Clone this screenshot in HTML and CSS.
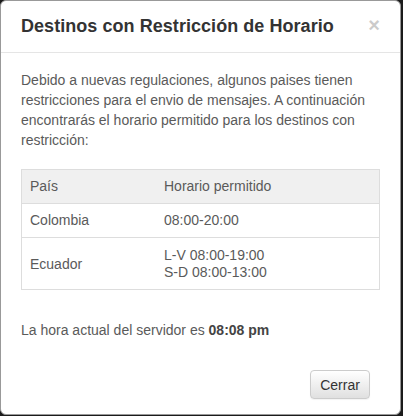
FILE: index.html
```html
<!DOCTYPE html>
<html lang="es">
<head>
<meta charset="utf-8">
<link rel="stylesheet" href="styles.css">
</head>
<body>
<div class="modal">
  <div class="modal-header">
    <h4 class="modal-title">Destinos con Restricción de Horario</h4>
    <span class="close">×</span>
  </div>
  <div class="modal-body">
    <p class="intro">Debido a nuevas regulaciones, algunos paises tienen restricciones para el envio de mensajes. A continuación encontrarás el horario permitido para los destinos con restricción:</p>
    <table class="sched">
      <thead>
        <tr><th class="c1">País</th><th>Horario permitido</th></tr>
      </thead>
      <tbody>
        <tr><td>Colombia</td><td>08:00-20:00</td></tr>
        <tr class="tall"><td>Ecuador</td><td>L-V 08:00-19:00<br>S-D 08:00-13:00</td></tr>
      </tbody>
    </table>
    <p class="now">La hora actual del servidor es <b>08:08 pm</b></p>
  </div>
  <div class="modal-footer">
    <button class="btn">Cerrar</button>
  </div>
</div>
</body>
</html>
```

FILE: styles.css
```css
html, body {
  margin: 0;
  padding: 0;
  background: #1b1b1b;
  height: 100%;
}
body {
  font-family: "Liberation Sans", Arial, sans-serif;
  font-size: 14px;
  color: #5a5a5a;
}
.modal {
  box-sizing: border-box;
  width: 401px;
  height: 415px;
  background: #fff;
  border: 1px solid #999;
  border-radius: 6px;
  overflow: hidden;
}
.modal-header {
  display: flex;
  justify-content: space-between;
  align-items: flex-start;
  padding: 15px 20px 15px 20px;
  border-bottom: 1px solid #e5e5e5;
}
.modal-title {
  margin: 0;
  font-size: 18px;
  line-height: 21px;
  font-weight: bold;
  color: #333;
  letter-spacing: 0.05px;
}
.close {
  font-size: 20px;
  font-weight: bold;
  line-height: 1;
  color: #000;
  opacity: 0.2;
  margin-top: -1px;
}
.modal-body {
  padding: 17px 20px 0 20px;
}
.intro {
  margin: 0 0 19px 0;
  line-height: 20px;
}
.sched {
  width: 100%;
  border-collapse: collapse;
  border: 1px solid #ddd;
  line-height: 17px;
}
.sched th, .sched td {
  text-align: left;
  font-weight: normal;
  padding: 8px 8px;
  border-top: 1px solid #ddd;
  vertical-align: middle;
}
.sched thead tr {
  background: #f0f0f0;
}
.sched .c1 {
  width: 118px;
}
.sched .tall td {
  padding-top: 9px;
  padding-bottom: 8px;
}
.now {
  margin: 30px 0 0 0;
  line-height: 20px;
}
.now b {
  color: #444;
}
.modal-footer {
  display: flex;
  justify-content: flex-end;
  padding: 30px 30px 0 0;
}
.btn {
  font-family: "Liberation Sans", Arial, sans-serif;
  font-size: 14px;
  color: #333;
  width: 60px;
  height: 29px;
  padding: 0;
  border: 1px solid #ccc;
  border-radius: 4px;
  background: linear-gradient(#ffffff, #e0e0e0);
  box-shadow: 0 1px 1px rgba(0,0,0,0.05);
}
```
